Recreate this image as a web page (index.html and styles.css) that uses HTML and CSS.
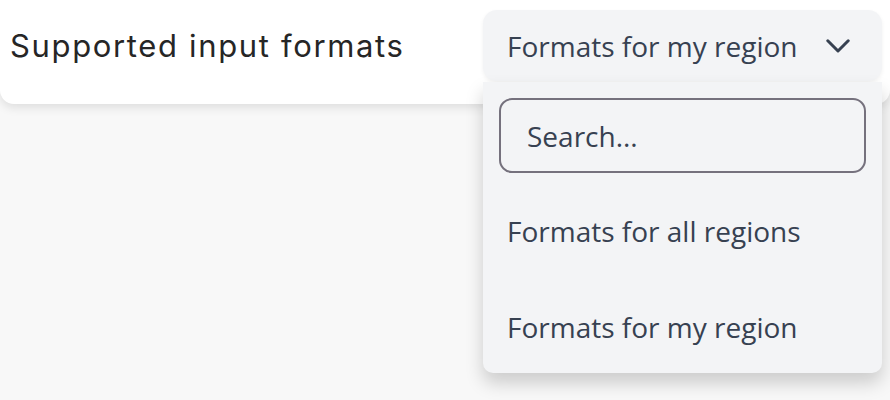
FILE: index.html
```html
<!DOCTYPE html>
<html lang="en">
<head>
<meta charset="utf-8">
<title>Supported input formats</title>
<link rel="stylesheet" href="styles.css">
</head>
<body>
<header class="bar">
  <h1 class="title">Supported input formats</h1>
  <div class="select">
    <button class="select-btn" type="button">
      <span class="select-value">Formats for my region</span>
      <svg class="chev" width="24" height="14" viewBox="0 0 24 14" aria-hidden="true"><path d="M1.8 1.8 L12 12 L22.2 1.8" fill="none" stroke="#374151" stroke-width="3" stroke-linecap="round" stroke-linejoin="round"/></svg>
    </button>
    <div class="menu">
      <div class="search">Search...</div>
      <ul class="options">
        <li class="option">Formats for all regions</li>
        <li class="option">Formats for my region</li>
      </ul>
    </div>
  </div>
</header>
</body>
</html>
```
FILE: styles.css
```css
html, body {
  margin: 0;
  padding: 0;
}
body {
  background: #f8f8f8;
  width: 890px;
  height: 400px;
  overflow: hidden;
}
.bar {
  display: flex;
  align-items: center;
  justify-content: space-between;
  background: #ffffff;
  padding: 10px 8px 23px 10px;
  border-radius: 0 0 14px 14px;
  box-shadow: 0 4px 10px rgba(0, 0, 0, 0.10);
}
.title {
  margin: 0;
  font-family: "Inter", "DejaVu Sans", sans-serif;
  font-weight: 400;
  font-size: 31px;
  letter-spacing: 1.65px;
  color: #262626;
}
.select {
  position: relative;
  width: 399px;
}
.select-btn {
  display: flex;
  align-items: center;
  justify-content: space-between;
  width: 100%;
  height: 71px;
  padding: 0 32px 0 24px;
  box-sizing: border-box;
  border: none;
  border-radius: 14px;
  background: #f3f4f6;
  box-shadow: 0 2px 4px rgba(0, 0, 0, 0.06);
  font-family: "Open Sans", sans-serif;
  font-size: 28px;
  line-height: 38px;
  color: #374151;
}
.chev {
  display: block;
}
.menu {
  position: absolute;
  top: 72px;
  left: 0;
  right: 0;
  background: #f3f4f6;
  border-radius: 0 0 10px 10px;
  box-shadow: 0 10px 18px rgba(0, 0, 0, 0.18);
  padding: 16px 0 0;
  font-family: "Open Sans", sans-serif;
  font-size: 28px;
  line-height: 38px;
  color: #374151;
}
.search {
  margin: 0 16px 10px;
  height: 75px;
  box-sizing: border-box;
  border: 2px solid #75717d;
  border-radius: 13px;
  padding: 0 26px;
  display: flex;
  align-items: center;
}
.options {
  list-style: none;
  margin: 0;
  padding: 0;
}
.option {
  padding: 29px 24px;
}
.option:last-child {
  padding-bottom: 27px;
}
```
